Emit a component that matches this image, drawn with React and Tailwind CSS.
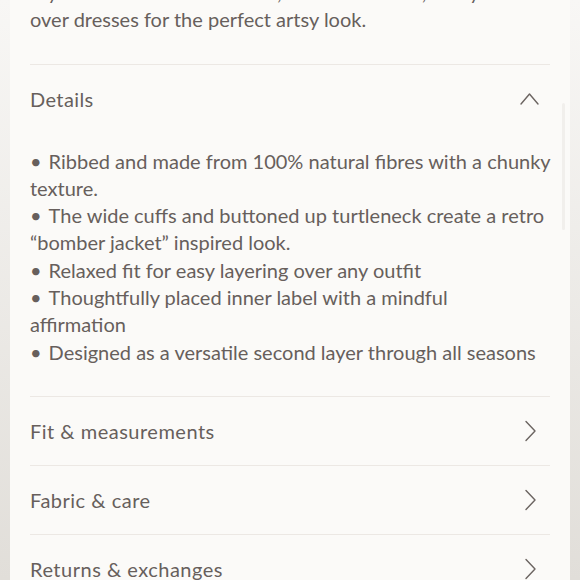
import React from "react";

const bullets = [
  ["Ribbed and made from 100% natural fibres with a chunky texture."],
  ["The wide cuffs and buttoned up turtleneck create a retro \u201cbomber jacket\u201d inspired look."],
  ["Relaxed fit for easy layering over any outfit"],
  ["Thoughtfully placed inner label with a mindful", "affirmation"],
  ["Designed as a versatile second layer through all seasons"],
];

function ChevronRight() {
  return (
    <svg width="13" height="22" viewBox="0 0 13 22" fill="none" className="shrink-0">
      <path d="M2 1.5 L11 11 L2 20.5" stroke="#6b6461" strokeWidth="1.4" strokeLinecap="round" strokeLinejoin="round" />
    </svg>
  );
}

function ChevronUp() {
  return (
    <svg width="19" height="13" viewBox="0 0 19 13" fill="none" className="shrink-0">
      <path d="M1 12 L9.5 2 L18 12" stroke="#6b6461" strokeWidth="1.4" strokeLinecap="round" strokeLinejoin="round" />
    </svg>
  );
}

function Row({ label }) {
  return (
    <div className="flex h-[69px] shrink-0 items-center justify-between border-t border-[#ece8e4] pr-[13px]">
      <span className="text-[20px] tracking-[0.5px]">{label}</span>
      <ChevronRight />
    </div>
  );
}

export default function App() {
  return (
    <div
      className="h-[580px] w-[580px] overflow-hidden bg-gradient-to-b from-[#f8f7f5] to-[#e1ded9] px-[10px] text-[#675f5c]"
      style={{ fontFamily: "Lato, 'Open Sans', sans-serif" }}
    >
      <div className="relative flex h-full flex-col overflow-hidden bg-[#fbfaf8] px-[20px]">
        <div className="absolute right-[5px] top-[103px] h-[127px] w-[3px] rounded-full bg-[#f1efec]" />
        <p className="-mt-[21px] shrink-0 pb-[30px] text-[20px] leading-[27.3px]">
          Style it with the Bella Shorts, Devotion Pants, or layered over dresses for the perfect artsy look.
        </p>
        <div className="flex h-[69px] shrink-0 items-center justify-between border-t border-[#ece8e4] pr-[11px]">
          <span className="text-[20px] tracking-[0.4px]">Details</span>
          <ChevronUp />
        </div>
        <ul className="-mr-[1px] shrink-0 pb-[30px] pt-[15px] text-[20px] leading-[27.3px]">
          {bullets.map((parts) => (
            <li key={parts[0]}>
              <span className="mr-[7px]">•</span>
              {parts[0]}
              {parts[1] && (
                <>
                  <br />
                  {parts[1]}
                </>
              )}
            </li>
          ))}
        </ul>
        <Row label="Fit & measurements" />
        <Row label="Fabric & care" />
        <Row label="Returns & exchanges" />
      </div>
    </div>
  );
}
